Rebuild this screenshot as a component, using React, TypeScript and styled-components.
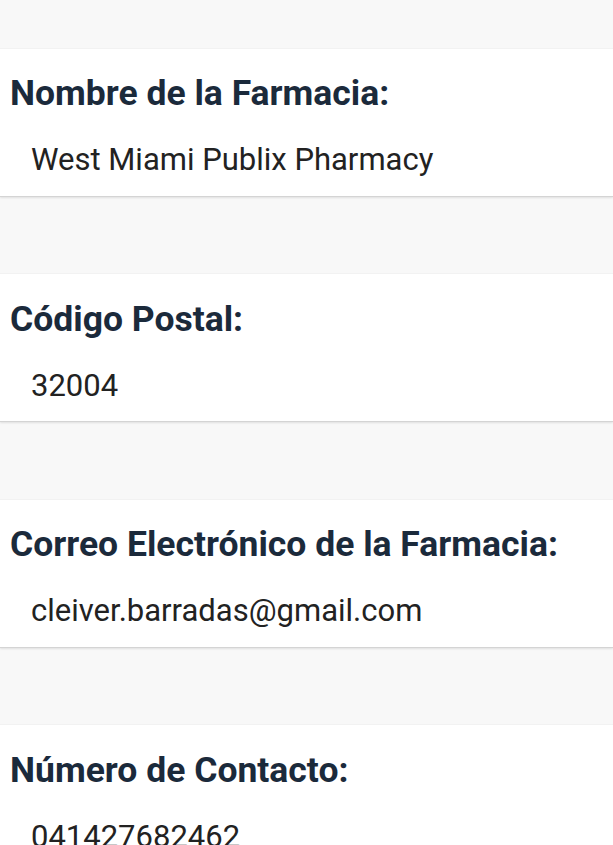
import React from 'react'
import styled, { createGlobalStyle } from 'styled-components'

const GlobalStyle = createGlobalStyle`
  * {
    box-sizing: border-box;
  }

  body {
    margin: 0;
    background: #f8f8f8;
    font-family: 'Roboto', 'Liberation Sans', sans-serif;
  }
`

const fields = [
  { label: 'Nombre de la Farmacia:', value: 'West Miami Publix Pharmacy' },
  { label: 'Código Postal:', value: '32004' },
  { label: 'Correo Electrónico de la Farmacia:', value: 'cleiver.barradas@gmail.com' },
  { label: 'Número de Contacto:', value: '041427682462' },
]

export default function App() {
  return (
    <>
      <GlobalStyle />
      <Page>
        {fields.map((f) => (
          <Card key={f.label}>
            <Label>{f.label}</Label>
            <Value>{f.value}</Value>
          </Card>
        ))}
      </Page>
    </>
  )
}

const Page = styled.main`
  display: flex;
  flex-direction: column;
  gap: 77.5px;
  padding-top: 47.5px;
  min-height: 100vh;
  background: #f8f8f8;
`

const Card = styled.section`
  display: flex;
  flex-direction: column;
  height: 148px;
  padding: 24.5px 0 0 10px;
  background: #fff;
  border-top: 1px solid #f2f2f2;
  box-shadow: 0 1px 0 #d4d4d4, 0 2px 2px rgba(0, 0, 0, 0.1);
`

const Label = styled.h2`
  margin: 0;
  font-size: 35.5px;
  line-height: 40px;
  font-weight: 700;
  color: #1b2a3b;
`

const Value = styled.p`
  margin: 29px 0 0 21px;
  font-size: 31px;
  line-height: 36px;
  font-weight: 400;
  color: #222;
`
